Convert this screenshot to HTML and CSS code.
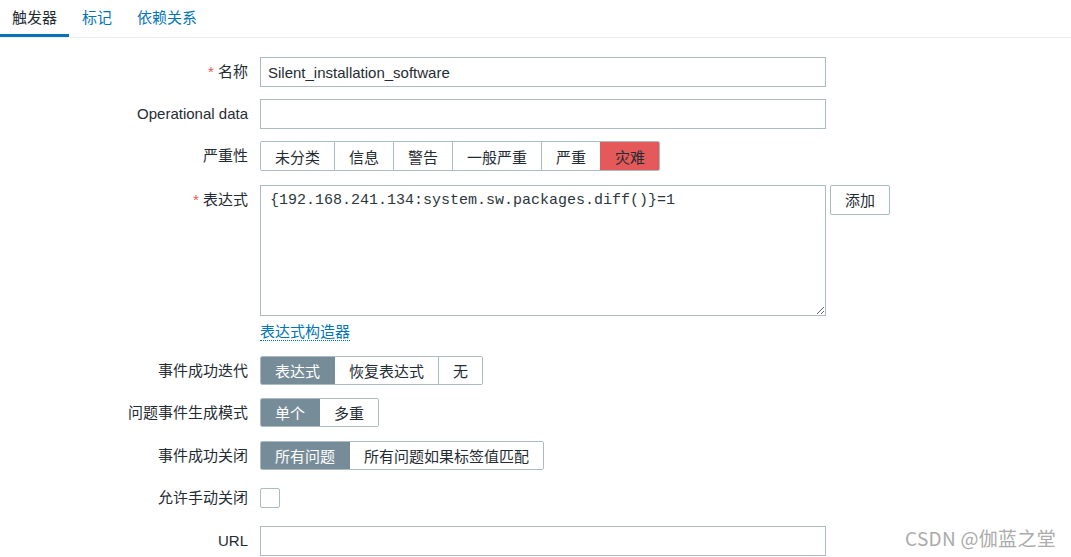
FILE: index.html
```html
<!DOCTYPE html>
<html lang="zh-CN">
<head>
<meta charset="utf-8">
<title>触发器</title>
<link rel="stylesheet" href="styles.css">
</head>
<body>
<nav class="tabs">
  <a class="tab tab-active">触发器</a>
  <a class="tab">标记</a>
  <a class="tab">依赖关系</a>
</nav>
<form class="form">
  <div class="row">
    <label class="label"><span class="req">*</span> 名称</label>
    <div class="field"><input class="input" type="text" value="Silent_installation_software"></div>
  </div>
  <div class="row">
    <label class="label">Operational data</label>
    <div class="field"><input class="input" type="text" value=""></div>
  </div>
  <div class="row row-sev">
    <label class="label">严重性</label>
    <div class="field">
      <div class="seg">
        <span class="seg-item">未分类</span>
        <span class="seg-item">信息</span>
        <span class="seg-item">警告</span>
        <span class="seg-item">一般严重</span>
        <span class="seg-item">严重</span>
        <span class="seg-item seg-disaster">灾难</span>
      </div>
    </div>
  </div>
  <div class="row row-expr">
    <label class="label label-top"><span class="req">*</span> 表达式</label>
    <div class="field field-expr">
      <textarea class="textarea">{192.168.241.134:system.sw.packages.diff()}=1</textarea>
      <button type="button" class="btn">添加</button>
    </div>
  </div>
  <div class="row row-link">
    <span class="label"></span>
    <div class="field"><a class="link">表达式构造器</a></div>
  </div>
  <div class="row row-radio">
    <label class="label">事件成功迭代</label>
    <div class="field">
      <div class="seg seg-radio">
        <span class="seg-item seg-on">表达式</span>
        <span class="seg-item">恢复表达式</span>
        <span class="seg-item">无</span>
      </div>
    </div>
  </div>
  <div class="row row-radio row-radio-wide">
    <label class="label">问题事件生成模式</label>
    <div class="field">
      <div class="seg seg-radio">
        <span class="seg-item seg-on">单个</span>
        <span class="seg-item">多重</span>
      </div>
    </div>
  </div>
  <div class="row row-radio row-radio-wide">
    <label class="label">事件成功关闭</label>
    <div class="field">
      <div class="seg seg-radio">
        <span class="seg-item seg-on">所有问题</span>
        <span class="seg-item">所有问题如果标签值匹配</span>
      </div>
    </div>
  </div>
  <div class="row row-check">
    <label class="label">允许手动关闭</label>
    <div class="field"><span class="checkbox"></span></div>
  </div>
  <div class="row row-url">
    <label class="label">URL</label>
    <div class="field"><input class="input" type="text" value=""></div>
  </div>
</form>
<div class="watermark">CSDN @伽蓝之堂</div>
</body>
</html>
```

FILE: styles.css
```css
* { box-sizing: border-box; }
html, body { margin: 0; padding: 0; }
body {
  width: 1071px;
  height: 557px;
  overflow: hidden;
  position: relative;
  background: #ffffff;
  color: #1f2c33;
  font-family: "Liberation Sans", Arial, "Noto Sans CJK SC", sans-serif;
  font-size: 15px;
}

.tabs {
  display: flex;
  height: 38px;
  border-bottom: 1px solid #ebeef0;
}
.tab {
  display: block;
  padding: 0 12px;
  height: 37px;
  line-height: 35px;
  color: #0275b8;
  font-size: 15px;
  margin-right: 1px;
}
.tab-active {
  color: #1f2c33;
  border-bottom: 3px solid #0275b8;
}

.form {
  display: flex;
  flex-direction: column;
  padding-top: 19px;
}
.row {
  display: grid;
  grid-template-columns: 248px 566px;
  column-gap: 12px;
  margin-bottom: 12px;
  height: 30px;
}
.label {
  text-align: right;
  line-height: 30px;
  white-space: nowrap;
}
.req { color: #e45959; }
.field { display: flex; align-items: center; }

.input {
  width: 566px;
  height: 30px;
  border: 1px solid #acbbc2;
  border-radius: 0;
  padding: 0 7px;
  font-family: "Liberation Sans", Arial, "Noto Sans CJK SC", sans-serif;
  font-size: 15px;
  color: #1f2c33;
  background: #fff;
  outline: none;
}

.seg {
  display: flex;
  height: 30px;
  border: 1px solid #acbbc2;
  border-radius: 2px;
  overflow: hidden;
}
.seg-item {
  display: flex;
  align-items: center;
  padding: 0 14px;
  border-left: 1px solid #acbbc2;
  background: #fff;
  color: #1f2c33;
  white-space: nowrap;
  font-family: "Noto Sans CJK SC", sans-serif;
  font-size: 15px;
}
.seg-item:first-child { border-left: none; }
.seg-disaster { background: #e45959; border-left-color: #e45959; }
.seg-radio { height: 29px; }
.seg-on { background: #768d99; color: #fff; }
.seg-on + .seg-item { border-left-color: #768d99; }

.row-sev { margin-bottom: 14px; }

.row-expr {
  height: 131px;
  margin-bottom: 5px;
  grid-template-columns: 248px 640px;
}
.label-top { align-self: start; }
.field-expr { align-items: flex-start; gap: 4px; }
.textarea {
  width: 566px;
  height: 131px;
  flex: none;
  border: 1px solid #acbbc2;
  border-radius: 0;
  padding: 6px 9px;
  margin: 0;
  font-family: "Liberation Mono", "Courier New", monospace;
  font-size: 15px;
  line-height: 18px;
  color: #2b373d;
  resize: both;
  outline: none;
}
.btn {
  height: 30px;
  padding: 0 14px;
  border: 1px solid #acbbc2;
  border-radius: 2px;
  background: #fff;
  color: #1f2c33;
  font-family: "Noto Sans CJK SC", sans-serif;
  font-size: 15px;
  line-height: 28px;
}

.row-link { height: 20px; margin-bottom: 15px; }
.row-link .label { line-height: 20px; }
.link {
  color: #0275b8;
  line-height: 18px;
  border-bottom: 1px dotted #0275b8;
  font-family: "Noto Sans CJK SC", sans-serif;
  font-size: 15px;
}

.row-radio { height: 29px; margin-bottom: 13px; }
.row-radio .label { line-height: 29px; }
.row-radio-wide { margin-bottom: 14px; }

.row-check { height: 28px; margin-bottom: 14px; }
.row-check .label { line-height: 28px; }
.checkbox {
  display: block;
  width: 20px;
  height: 20px;
  border: 1px solid #acbbc2;
  border-radius: 2px;
  background: #fff;
}

.watermark {
  position: absolute;
  right: 15px;
  bottom: 8px;
  color: #ababab;
  font-family: "Noto Sans CJK SC", sans-serif;
  font-size: 19px;
  line-height: 22px;
  letter-spacing: 0.3px;
}
```
